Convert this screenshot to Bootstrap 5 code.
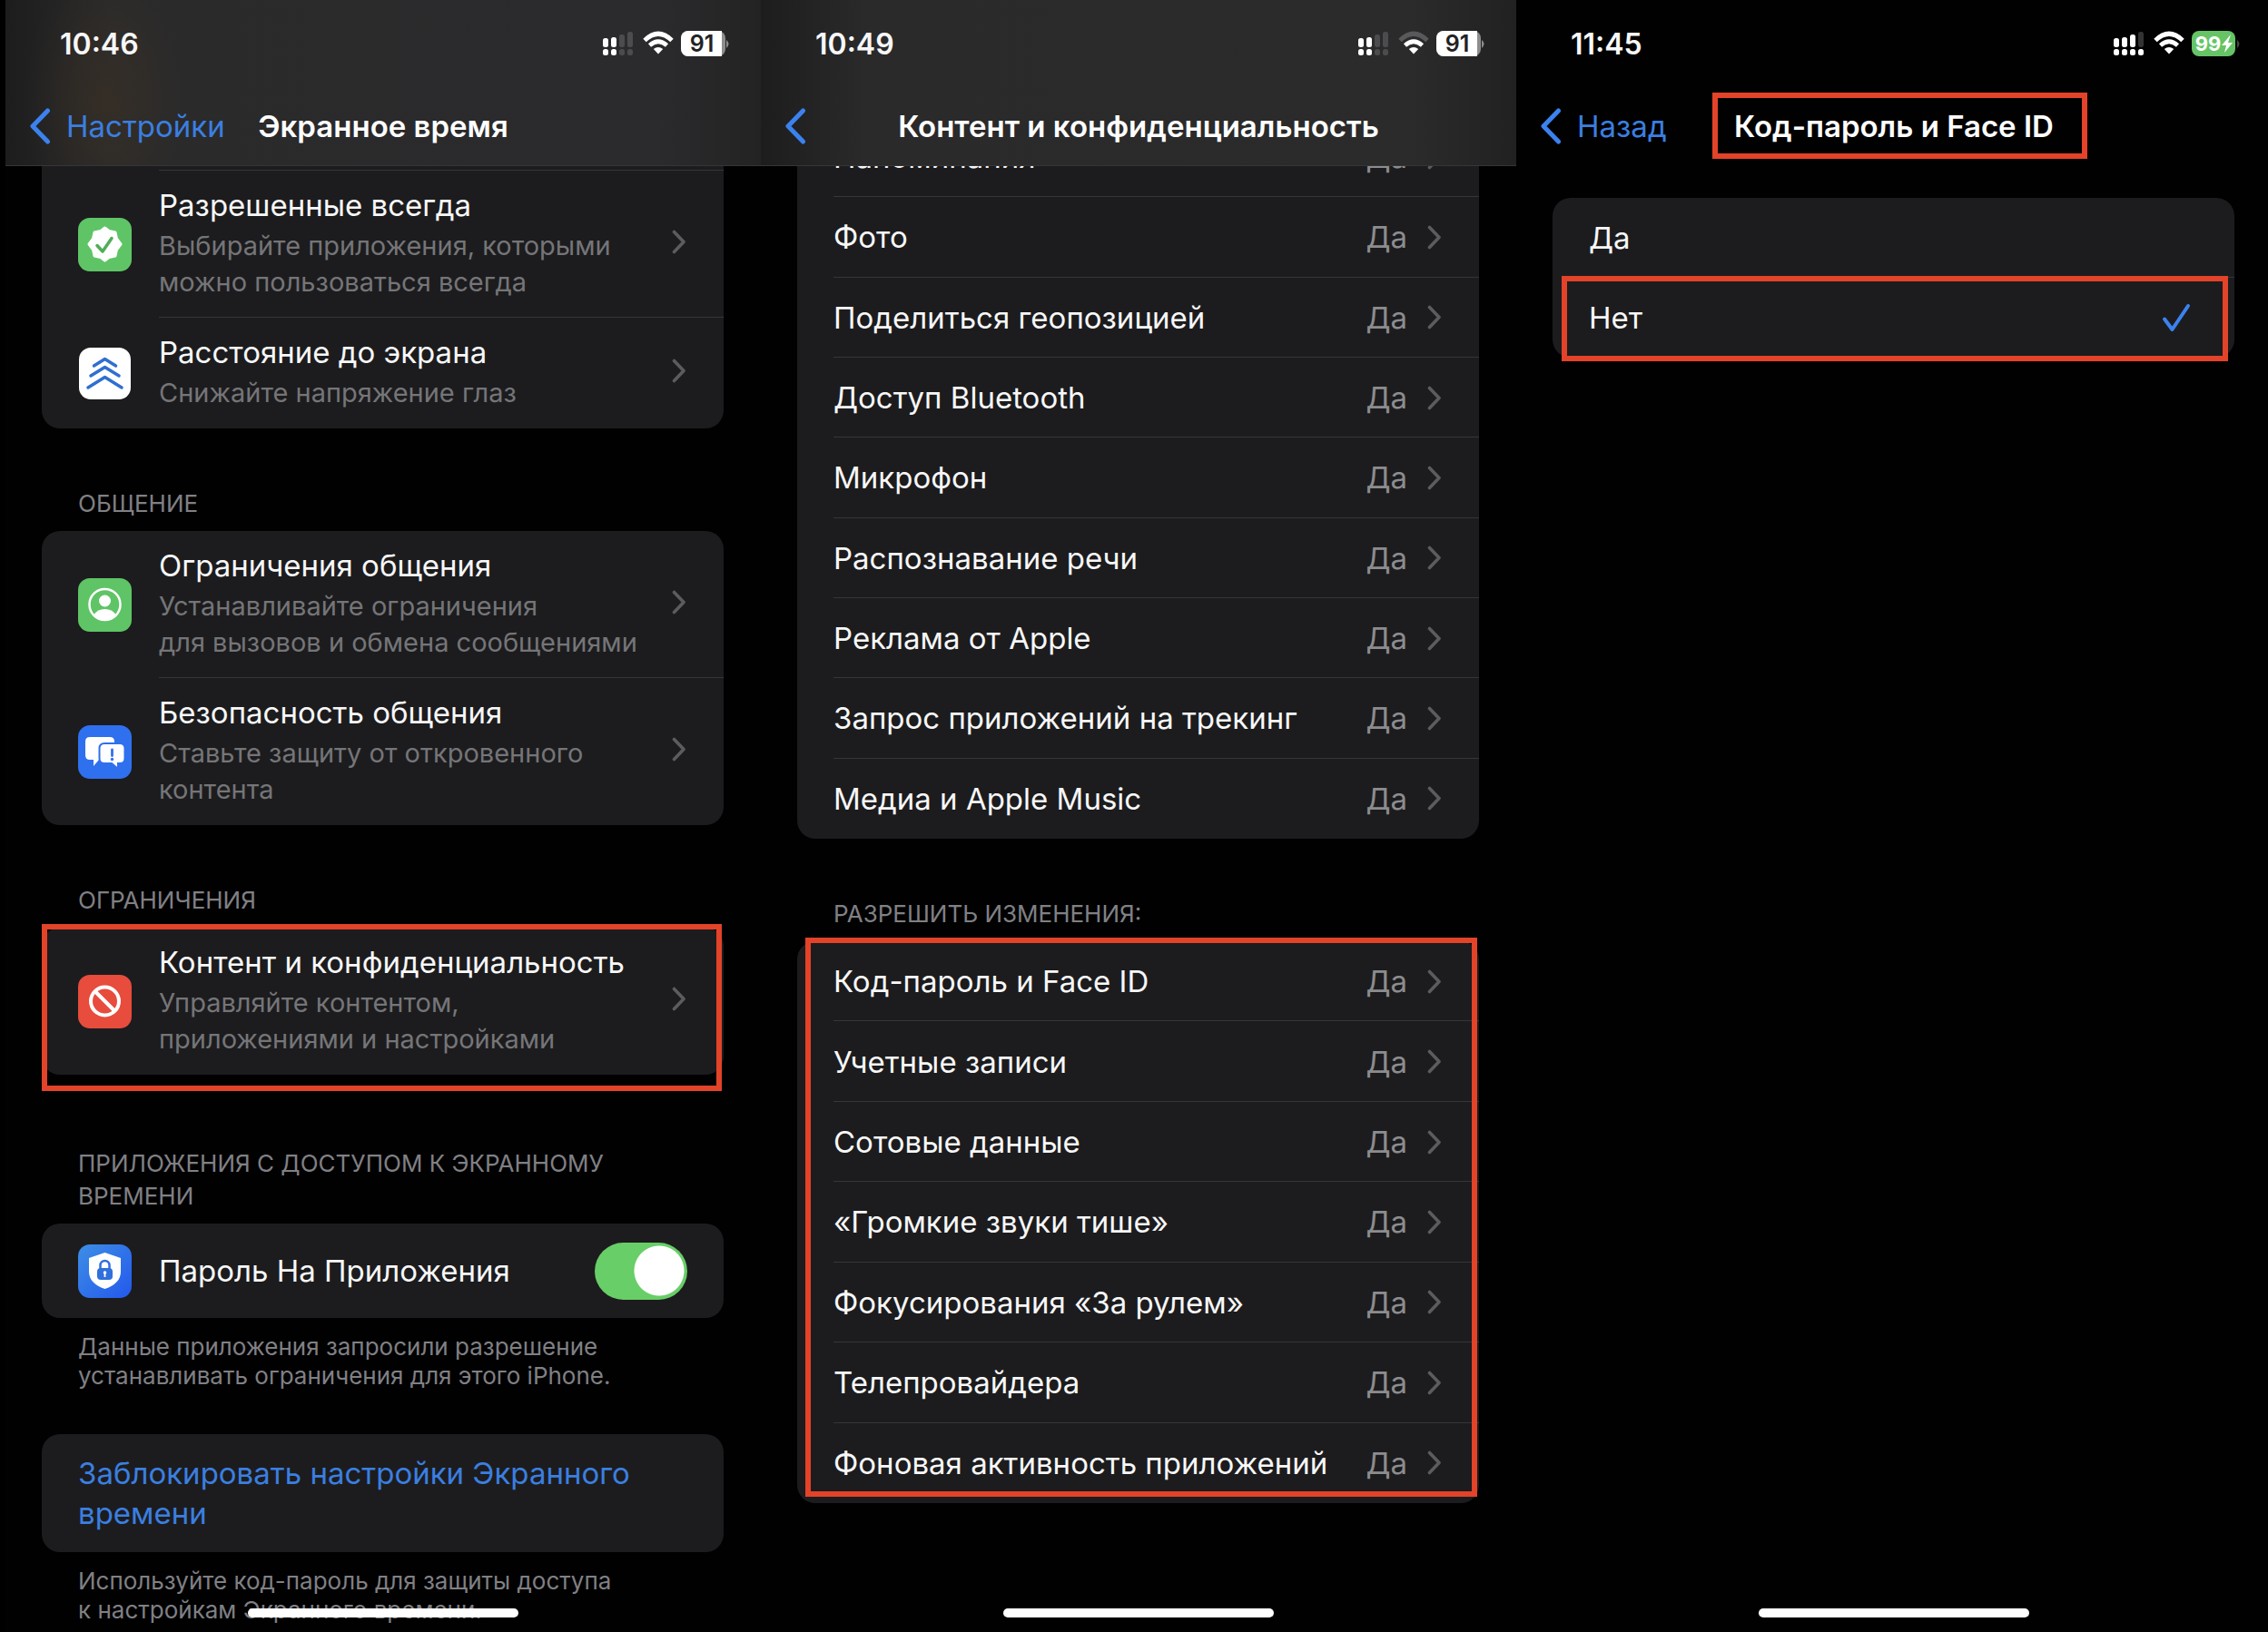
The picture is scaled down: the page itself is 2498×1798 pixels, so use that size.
<!DOCTYPE html>
<html lang="ru" data-bs-theme="dark">
<head>
<meta charset="utf-8">
<meta name="viewport" content="width=device-width, initial-scale=1">
<title>Экранное время</title>
<link href="https://cdn.jsdelivr.net/npm/bootstrap@5.3.0/dist/css/bootstrap.min.css" rel="stylesheet">
<style>
  :root{--ui-card:#1c1c1e;--ui-line:#363638;--ui-sub:#757578;--ui-val:#8c8c8f;--ui-blue:#3b7fe0;--ui-red:#e24329}
  body{background:#000;color:#f7f7f7;font-family:Inter,"Liberation Sans",sans-serif;font-size:33px;line-height:44px;overflow:hidden}
  a{color:inherit;text-decoration:none}
  .phones{padding-left:6px;margin-right:-4px}
  .phone{flex:1 1 0;min-width:0;height:100vh;background:#010102}
  .top-bar{height:183px;border-bottom:1px solid transparent}
  .top-glass{background:linear-gradient(90deg,#1d1d1e 0,#2a2a2b 14%,#2b2b2c 86%,#212122 100%);border-bottom-color:#363638}
  .top-warm{background:radial-gradient(ellipse 90px 150px at 110px 110px,#3a3024aa,transparent),linear-gradient(90deg,#1d1d1e 0,#2a2a2b 14%,#2b2a2c 86%,#232324 100%)}
  .status-row{padding:30px 34px 0 60px;height:94px}
  .clock{font-size:32px;font-weight:600;line-height:38px}
  .status-row svg{display:block}
  .nav-row{display:grid;grid-template-columns:1fr auto 1fr;padding:0 26px;height:89px;align-items:center}
  .nav-title{font-size:33px;font-weight:600;line-height:44px;margin:0}
  .back-link{color:var(--ui-blue);display:flex;align-items:center;gap:17px}
  .feed{padding:0 41px 0 40px}
  .group-card{background:var(--ui-card);border-radius:20px}
  .card-cut{border-top-left-radius:0;border-top-right-radius:0;padding-top:5px}
  .entry{display:flex;align-items:center;padding-left:40px}
  .entry-icon{width:59px;height:59px;flex:none;margin-right:30px}
  .entry-body{flex:1;display:flex;align-items:center;padding:14px 41px 19px 0;min-width:0}
  .entry+.entry .entry-body,.card-cut .entry-body{box-shadow:0 -1px 0 var(--ui-line)}
  .entry-title{line-height:49px;display:block}
  .entry-sub{font-size:29px;line-height:40px;color:var(--ui-sub);display:block}
  .entry-toggle{height:104px;padding-right:40px}
  .chev{width:16px;height:27px;flex:none;margin-left:auto}
  .sect{font-size:26px;line-height:36px;color:#808084;margin:0;padding:65px 40px 12px;font-weight:400}
  .sect-far{padding-top:80px}
  .foot-note{font-size:26px;line-height:32px;color:#808084;margin:0;padding:16px 40px 0}
  .list-perm{display:flex;flex-direction:column}
  .list-scrolled{min-height:795px;margin-top:-54px}
  .list-changes{min-height:619px}
  .perm{flex:1 1 0;display:flex;align-items:center;margin-left:40px;padding-right:41px}
  .perm+.perm{box-shadow:0 -1px 0 var(--ui-line)}
  .perm-val{margin-left:auto;margin-right:22px;color:var(--ui-val)}
  .perm .chev{margin-left:0}
  .red-mark{position:absolute;border:6px solid var(--ui-red);pointer-events:none}
  .mark-content{inset:-4px 2px -18px 0}
  .mark-changes{inset:-4px 2px 7px 9px}
  .mark-title{inset:-15px -37px -14px -24px}
  .mark-choice{inset:86px 7px -4px 10px}
  .home-pill{position:absolute;left:50%;bottom:16px;width:298px;height:10px;margin-left:-149px;border-radius:5px;background:#fff}
  .ios-switch{appearance:none;width:102px;height:63px;border-radius:32px;background:radial-gradient(circle at 71px 31px,#fff 27px,transparent 28px),#68ce67;margin:0 0 0 auto;border:0;flex:none}
  .lock-btn{color:var(--ui-blue);border:0;text-align:left;padding:21px 40px;width:100%;display:block;margin-top:48px}
  .choices{margin-top:35px}
  .choice{display:flex;align-items:center;height:88px;margin-left:40px;padding-right:47px}
  .choice+.choice{box-shadow:0 -1px 0 var(--ui-line)}
  .wifi-weak{--outer:#59595b}
</style>
<script src="https://cdn.jsdelivr.net/npm/bootstrap@5.3.0/dist/js/bootstrap.bundle.min.js"></script>
</head>
<body>
<svg width="0" height="0" class="position-absolute" aria-hidden="true">
  <symbol id="chev" viewBox="0 0 16 27"><path d="M2.500 2.500 13 13.500 2.500 24.500" fill="none" stroke="#5c5c60" stroke-width="3.600" stroke-linecap="round" stroke-linejoin="round"/></symbol>
  <symbol id="back" viewBox="0 0 24 40"><path d="M20.500 3 4 20 20.500 37" fill="none" stroke="#3b82ee" stroke-width="5" stroke-linecap="round" stroke-linejoin="round"/></symbol>
  <symbol id="wifi" viewBox="0 0 34 26"><path d="M2 10.500Q17-4 32 10.500" fill="none" stroke="var(--outer,#fff)" stroke-width="5"/><path d="M7.500 16Q17 7.500 26.500 16" fill="none" stroke="#fff" stroke-width="4.600"/><path d="M17 25.500 11.800 20Q17 15.800 22.200 20Z" fill="#fff"/></symbol>
</svg>
<main class="phones d-flex">

<section class="phone position-relative overflow-hidden d-flex flex-column">
  <header class="top-bar top-glass top-warm flex-shrink-0">
    <div class="status-row d-flex justify-content-between">
      <span class="clock">10:46</span>
      <svg width="142" height="34" viewBox="0 0 142 34" role="img" aria-label="Сигнал, Wi-Fi, батарея 91">
        <g fill="#fff"><rect x="2" y="12" width="6" height="10" rx="2.500"/><rect x="11" y="11" width="6" height="11" rx="2.500"/><rect x="2" y="24" width="6" height="7" rx="2.500"/><rect x="11" y="24" width="6" height="7" rx="2.500"/></g>
        <g fill="#4c4c4e"><rect x="20" y="8" width="6" height="14" rx="2.500"/><rect x="29" y="5" width="6" height="17" rx="2.500"/><rect x="20" y="24" width="6" height="7" rx="2.500"/><rect x="29" y="24" width="6" height="7" rx="2.500"/></g>
        <use href="#wifi" x="46" y="4" width="34" height="26"/>
        <rect x="88" y="4" width="49" height="28" rx="8" fill="#8d8d8f"/><path d="M96 4h37v28H96a8 8 0 0 1-8-8V12a8 8 0 0 1 8-8z" fill="#fff"/><path d="M138 14q5 4 0 9z" fill="#8d8d8f"/>
        <text x="111" y="27" font-size="25" font-weight="600" text-anchor="middle" fill="#222">91</text>
      </svg>
    </div>
    <nav class="nav-row">
      <a class="back-link" href="#"><svg width="24" height="40"><use href="#back"/></svg>Настройки</a>
      <h1 class="nav-title">Экранное время</h1><span></span>
    </nav>
  </header>
  <div class="feed">
    <div class="group-card card-cut">
      <a class="entry" href="#">
        <svg class="entry-icon" viewBox="0 0 59 59"><rect width="59" height="59" rx="13" fill="#5fc466"/><path d="M29.500 11 34 14.500 41 16 42.500 23 47 29 42.500 35 41 42 34 43.500 29.500 47 25 43.500 18 42 16.500 35 12 29 16.500 23 18 16 25 14.500Z" fill="#fff" stroke="#fff" stroke-width="3" stroke-linejoin="round"/><path d="M21 30.500l6 6.500 10-14.500" fill="none" stroke="#4fae57" stroke-width="3.500" stroke-linecap="round" stroke-linejoin="round"/></svg>
        <span class="entry-body"><span><span class="entry-title">Разрешенные всегда</span><span class="entry-sub">Выбирайте приложения, которыми<br>можно пользоваться всегда</span></span><svg class="chev"><use href="#chev"/></svg></span>
      </a>
      <a class="entry" href="#">
        <svg class="entry-icon" viewBox="0 0 59 59"><rect x="1" y="1" width="57" height="57" rx="13" fill="#fff"/><path d="M17.500 21 29.500 13.500 41.500 21M14 32 29.500 22.500 45 32M11 45 29.500 33.500 48 45" fill="none" stroke="#2f6fd0" stroke-width="3.500" stroke-linecap="round" stroke-linejoin="round"/></svg>
        <span class="entry-body"><span><span class="entry-title">Расстояние до экрана</span><span class="entry-sub">Снижайте напряжение глаз</span></span><svg class="chev"><use href="#chev"/></svg></span>
      </a>
    </div>
    <h2 class="sect">ОБЩЕНИЕ</h2>
    <div class="group-card">
      <a class="entry" href="#">
        <svg class="entry-icon" viewBox="0 0 59 59"><rect width="59" height="59" rx="13" fill="#5fc466"/><circle cx="29.500" cy="29" r="17" fill="none" stroke="#fff" stroke-width="2.500"/><circle cx="29.500" cy="25" r="6.500" fill="#fff"/><path d="M17.500 40q4-6 12-6t12 6q-5 6-12 6t-12-6z" fill="#fff"/></svg>
        <span class="entry-body"><span><span class="entry-title">Ограничения общения</span><span class="entry-sub">Устанавливайте ограничения<br>для вызовов и обмена сообщениями</span></span><svg class="chev"><use href="#chev"/></svg></span>
      </a>
      <a class="entry" href="#">
        <svg class="entry-icon" viewBox="0 0 59 59"><rect width="59" height="59" rx="13" fill="#2f70ee"/><path d="M13 13h22q5 0 5 5v15q0 5-5 5H23l-6 7v-7h-4q-5 0-5-5V18q0-5 5-5z" fill="#fff"/><path d="M29 20h17q5.500 0 5.500 5.500v11q0 5.500-5.500 5.500h-2v6l-7-6h-8q-5.500 0-5.500-5.500v-11q0-5.500 5.500-5.500z" fill="#fff" stroke="#2f70ee" stroke-width="2"/><path d="M37.500 27v6.500" stroke="#2f70ee" stroke-width="2.800" stroke-linecap="round"/><circle cx="37.500" cy="37.500" r="1.700" fill="#2f70ee"/></svg>
        <span class="entry-body"><span><span class="entry-title">Безопасность общения</span><span class="entry-sub">Ставьте защиту от откровенного<br>контента</span></span><svg class="chev"><use href="#chev"/></svg></span>
      </a>
    </div>
    <h2 class="sect">ОГРАНИЧЕНИЯ</h2>
    <div class="group-card position-relative">
      <a class="entry" href="#">
        <svg class="entry-icon" viewBox="0 0 59 59"><rect width="59" height="59" rx="13" fill="#e74c3c"/><circle cx="29.500" cy="29" r="15.500" fill="none" stroke="#fff" stroke-width="4"/><path d="M18.500 18l22 22" stroke="#fff" stroke-width="4"/></svg>
        <span class="entry-body"><span><span class="entry-title">Контент и конфиденциальность</span><span class="entry-sub">Управляйте контентом,<br>приложениями и настройками</span></span><svg class="chev"><use href="#chev"/></svg></span>
      </a>
      <span class="red-mark mark-content"></span>
    </div>
    <h2 class="sect sect-far">ПРИЛОЖЕНИЯ С ДОСТУПОМ К ЭКРАННОМУ ВРЕМЕНИ</h2>
    <div class="group-card">
      <div class="entry entry-toggle">
        <svg class="entry-icon" viewBox="0 0 59 59"><defs><linearGradient id="shieldFill" x2="1" y2="1"><stop stop-color="#3d8ee6"/><stop offset="1" stop-color="#2358ec"/></linearGradient></defs><rect width="59" height="59" rx="13" fill="url(#shieldFill)"/><path d="M29.500 9l17.500 6v15q0 13-17.500 19Q12 43 12 30V15z" fill="#fff"/><rect x="21" y="26" width="17" height="13" rx="4" fill="#2f70dc"/><path d="M24.500 27v-4a5 5 0 0 1 10 0v4" fill="none" stroke="#2f70dc" stroke-width="2.500"/><circle cx="29.500" cy="31" r="1.800" fill="#fff"/><path d="M29.500 31v5" stroke="#fff" stroke-width="1.800"/></svg>
        <label for="appPass">Пароль На Приложения</label>
        <input class="ios-switch" type="checkbox" role="switch" id="appPass" checked>
      </div>
    </div>
    <p class="foot-note">Данные приложения запросили разрешение<br>устанавливать ограничения для этого iPhone.</p>
    <button type="button" class="lock-btn group-card">Заблокировать настройки Экранного времени</button>
    <p class="foot-note">Используйте код-пароль для защиты доступа<br>к настройкам Экранного времени.</p>
  </div>
  <span class="home-pill"></span>
</section>

<section class="phone position-relative overflow-hidden d-flex flex-column">
  <header class="top-bar top-glass flex-shrink-0">
    <div class="status-row d-flex justify-content-between">
      <span class="clock">10:49</span>
      <svg width="142" height="34" viewBox="0 0 142 34" role="img" aria-label="Сигнал, Wi-Fi, батарея 91">
        <g fill="#fff"><rect x="2" y="12" width="6" height="10" rx="2.500"/><rect x="11" y="11" width="6" height="11" rx="2.500"/><rect x="2" y="24" width="6" height="7" rx="2.500"/><rect x="11" y="24" width="6" height="7" rx="2.500"/></g>
        <g fill="#4c4c4e"><rect x="20" y="8" width="6" height="14" rx="2.500"/><rect x="29" y="5" width="6" height="17" rx="2.500"/><rect x="20" y="24" width="6" height="7" rx="2.500"/><rect x="29" y="24" width="6" height="7" rx="2.500"/></g>
        <use class="wifi-weak" href="#wifi" x="46" y="4" width="34" height="26"/>
        <rect x="88" y="4" width="49" height="28" rx="8" fill="#8d8d8f"/><path d="M96 4h37v28H96a8 8 0 0 1-8-8V12a8 8 0 0 1 8-8z" fill="#fff"/><path d="M138 14q5 4 0 9z" fill="#8d8d8f"/>
        <text x="111" y="27" font-size="25" font-weight="600" text-anchor="middle" fill="#222">91</text>
      </svg>
    </div>
    <nav class="nav-row">
      <a class="back-link" href="#" aria-label="Назад"><svg width="24" height="40"><use href="#back"/></svg></a>
      <h1 class="nav-title">Контент и конфиденциальность</h1><span></span>
    </nav>
  </header>
  <div class="feed overflow-hidden">
    <div class="group-card list-perm list-scrolled">
      <a class="perm" href="#">Напоминания<span class="perm-val">Да</span><svg class="chev"><use href="#chev"/></svg></a>
      <a class="perm" href="#">Фото<span class="perm-val">Да</span><svg class="chev"><use href="#chev"/></svg></a>
      <a class="perm" href="#">Поделиться геопозицией<span class="perm-val">Да</span><svg class="chev"><use href="#chev"/></svg></a>
      <a class="perm" href="#">Доступ Bluetooth<span class="perm-val">Да</span><svg class="chev"><use href="#chev"/></svg></a>
      <a class="perm" href="#">Микрофон<span class="perm-val">Да</span><svg class="chev"><use href="#chev"/></svg></a>
      <a class="perm" href="#">Распознавание речи<span class="perm-val">Да</span><svg class="chev"><use href="#chev"/></svg></a>
      <a class="perm" href="#">Реклама от Apple<span class="perm-val">Да</span><svg class="chev"><use href="#chev"/></svg></a>
      <a class="perm" href="#">Запрос приложений на трекинг<span class="perm-val">Да</span><svg class="chev"><use href="#chev"/></svg></a>
      <a class="perm" href="#">Медиа и Apple Music<span class="perm-val">Да</span><svg class="chev"><use href="#chev"/></svg></a>
    </div>
    <h2 class="sect">РАЗРЕШИТЬ ИЗМЕНЕНИЯ:</h2>
    <div class="group-card list-perm list-changes position-relative">
      <a class="perm" href="#">Код-пароль и Face ID<span class="perm-val">Да</span><svg class="chev"><use href="#chev"/></svg></a>
      <a class="perm" href="#">Учетные записи<span class="perm-val">Да</span><svg class="chev"><use href="#chev"/></svg></a>
      <a class="perm" href="#">Сотовые данные<span class="perm-val">Да</span><svg class="chev"><use href="#chev"/></svg></a>
      <a class="perm" href="#">«Громкие звуки тише»<span class="perm-val">Да</span><svg class="chev"><use href="#chev"/></svg></a>
      <a class="perm" href="#">Фокусирования «За рулем»<span class="perm-val">Да</span><svg class="chev"><use href="#chev"/></svg></a>
      <a class="perm" href="#">Телепровайдера<span class="perm-val">Да</span><svg class="chev"><use href="#chev"/></svg></a>
      <a class="perm" href="#">Фоновая активность приложений<span class="perm-val">Да</span><svg class="chev"><use href="#chev"/></svg></a>
      <span class="red-mark mark-changes"></span>
    </div>
  </div>
  <span class="home-pill"></span>
</section>

<section class="phone position-relative overflow-hidden d-flex flex-column">
  <header class="top-bar flex-shrink-0">
    <div class="status-row d-flex justify-content-between">
      <span class="clock">11:45</span>
      <svg width="142" height="34" viewBox="0 0 142 34" role="img" aria-label="Сигнал, Wi-Fi, батарея 99, зарядка">
        <g fill="#fff"><rect x="2" y="12" width="6" height="10" rx="2.500"/><rect x="11" y="11" width="6" height="11" rx="2.500"/><rect x="20" y="8" width="6" height="14" rx="2.500"/><rect x="2" y="24" width="6" height="7" rx="2.500"/><rect x="11" y="24" width="6" height="7" rx="2.500"/><rect x="20" y="24" width="6" height="7" rx="2.500"/><rect x="29" y="24" width="6" height="7" rx="2.500"/></g>
        <rect x="29" y="5" width="6" height="17" rx="2.500" fill="#333"/>
        <use href="#wifi" x="46" y="4" width="34" height="26"/>
        <rect x="88" y="4" width="48" height="28" rx="8" fill="#66c466"/><path d="M138 14q5 4 0 9z" fill="#444"/>
        <text x="106" y="26" font-size="22" font-weight="700" text-anchor="middle" fill="#fff">99</text>
        <path d="M131 8l-10 12h5l-2 8 9-11h-5z" fill="#fff"/>
      </svg>
    </div>
    <nav class="nav-row">
      <a class="back-link" href="#"><svg width="24" height="40"><use href="#back"/></svg>Назад</a>
      <h1 class="nav-title position-relative">Код-пароль и Face ID<span class="red-mark mark-title"></span></h1><span></span>
    </nav>
  </header>
  <div class="feed">
    <div class="group-card choices position-relative">
      <a class="choice" href="#">Да</a>
      <a class="choice" href="#" aria-current="true">Нет<svg class="ms-auto" width="34" height="34" viewBox="0 0 34 34"><path d="M4 18.500l8.500 11.500L30 4" fill="none" stroke="#3b82f0" stroke-width="4" stroke-linecap="round" stroke-linejoin="round"/></svg></a>
      <span class="red-mark mark-choice"></span>
    </div>
  </div>
  <span class="home-pill"></span>
</section>
</main>
</body>
</html>
